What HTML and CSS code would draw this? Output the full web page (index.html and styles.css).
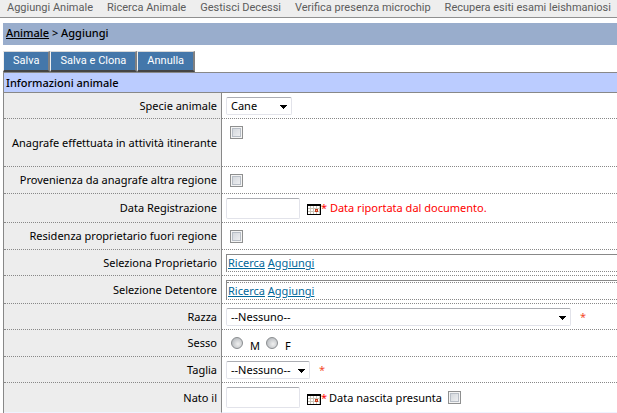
FILE: index.html
```html
<!DOCTYPE html>
<html lang="it">
<head>
<meta charset="utf-8">
<title>Aggiungi Animale</title>
<link rel="stylesheet" href="styles.css">
</head>
<body>
<nav class="menu">
  <a href="#">Aggiungi Animale</a>
  <a href="#">Ricerca Animale</a>
  <a href="#">Gestisci Decessi</a>
  <a href="#">Verifica presenza microchip</a>
  <a href="#">Recupera esiti esami leishmaniosi</a>
</nav>
<main>
  <div class="trail"><a href="#">Animale</a> &gt; Aggiungi</div>
  <form>
    <div class="actions">
      <button type="button">Salva</button>
      <button type="button">Salva e Clona</button>
      <button type="button">Annulla</button>
    </div>
    <table class="details">
      <thead>
        <tr><th colspan="2">Informazioni animale</th></tr>
      </thead>
      <tbody>
        <tr class="short">
          <td class="label"><label for="specie">Specie animale</label></td>
          <td><div class="field"><span class="select"><select id="specie" class="narrow"><option>Cane</option></select><svg class="arrow" viewBox="0 0 7 4"><path d="M0 0h7v1H6v1H5v1H4v1H3V3H2V2H1V1H0z"/></svg></span></div></td>
        </tr>
        <tr class="tall">
          <td class="label"><label for="itinerante">Anagrafe effettuata in attività itinerante</label></td>
          <td><div class="field"><input type="checkbox" id="itinerante"></div></td>
        </tr>
        <tr>
          <td class="label"><label for="altra">Provenienza da anagrafe altra regione</label></td>
          <td><div class="field"><input type="checkbox" id="altra"></div></td>
        </tr>
        <tr class="date">
          <td class="label"><label for="registrazione">Data Registrazione</label></td>
          <td><div class="field"><input type="text" id="registrazione"><svg class="calendar" viewBox="0 0 14 11"><path fill="#000" d="M0 0h14v11H0z"/><path fill="#fff" d="M1 2h12v8H1z"/><path fill="#c9c4b6" d="M3 2h1v8H3zM6 2h1v8H6zM9 2h1v8H9zM12 2h1v8h-1zM1 4h12v1H1zM1 7h12v1H1z"/><path fill="#c33a1e" d="M8 5h3v3H8z"/><path fill="#ffb18c" d="M9 6h1v1H9z"/></svg><span class="warning">* Data riportata dal documento.</span></div></td>
        </tr>
        <tr>
          <td class="label"><label for="fuori">Residenza proprietario fuori regione</label></td>
          <td><div class="field"><input type="checkbox" id="fuori"></div></td>
        </tr>
        <tr class="short">
          <td class="label">Seleziona Proprietario</td>
          <td class="flush"><div class="picker"><div><a href="#">Ricerca</a> <a href="#">Aggiungi</a></div></div></td>
        </tr>
        <tr class="double">
          <td class="label">Selezione Detentore</td>
          <td class="flush"><div class="picker ruled"><div><a href="#">Ricerca</a> <a href="#">Aggiungi</a></div></div></td>
        </tr>
        <tr class="short">
          <td class="label"><label for="razza">Razza</label></td>
          <td><div class="field"><span class="select"><select id="razza" class="wide"><option>--Nessuno--</option></select><svg class="arrow" viewBox="0 0 7 4"><path d="M0 0h7v1H6v1H5v1H4v1H3V3H2V2H1V1H0z"/></svg></span><span class="required">*</span></div></td>
        </tr>
        <tr>
          <td class="label">Sesso</td>
          <td><div class="field"><input type="radio" name="sesso" id="m"><label class="sex" for="m">M</label><input type="radio" name="sesso" id="f"><label class="sex" for="f">F</label></div></td>
        </tr>
        <tr class="short">
          <td class="label"><label for="taglia">Taglia</label></td>
          <td><div class="field"><span class="select"><select id="taglia" class="medium"><option>--Nessuno--</option></select><svg class="arrow" viewBox="0 0 7 4"><path d="M0 0h7v1H6v1H5v1H4v1H3V3H2V2H1V1H0z"/></svg></span><span class="required">*</span></div></td>
        </tr>
        <tr class="birth">
          <td class="label"><label for="nato">Nato il</label></td>
          <td><div class="field"><input type="text" id="nato"><svg class="calendar" viewBox="0 0 14 11"><path fill="#000" d="M0 0h14v11H0z"/><path fill="#fff" d="M1 2h12v8H1z"/><path fill="#c9c4b6" d="M3 2h1v8H3zM6 2h1v8H6zM9 2h1v8H9zM12 2h1v8h-1zM1 4h12v1H1zM1 7h12v1H1z"/><path fill="#c33a1e" d="M8 5h3v3H8z"/><path fill="#ffb18c" d="M9 6h1v1H9z"/></svg><span class="star">*</span><label class="presumed" for="presunta">Data nascita presunta</label><input type="checkbox" id="presunta"></div></td>
        </tr>
      </tbody>
    </table>
  </form>
</main>
</body>
</html>
```
FILE: styles.css
```css
* { box-sizing: border-box; }
body {
  margin: 0;
  background: #fff;
  color: #000;
  font: 11px/14px "Trebuchet MS", "Noto Sans", sans-serif;
  overflow-x: hidden;
}
button, input, select { font: inherit; margin: 0; }

.menu {
  display: flex;
  gap: 14px;
  height: 18px;
  padding: 1px 7px 0;
  background: #eee;
  border-bottom: 1px solid #909090;
  font-family: "Trebuchet MS", Roboto, sans-serif;
  white-space: nowrap;
}
.menu a { color: #5c5c5c; text-decoration: none; }

main { padding: 5px 0 0 3px; }
.trail {
  height: 22px;
  padding: 3px;
  background: #99adcc;
  font-weight: 500;
}
.trail a { color: #000; }

.actions { display: flex; padding-top: 6px; }
.actions button {
  height: 21px;
  padding: 0 9px;
  border: solid;
  border-width: 1px 2px 2px 1px;
  border-color: #d8d8d8 #808080 #444 #f0f0f0;
  background: #47a;
  color: #fff;
  font-family: "Trebuchet MS", Roboto, sans-serif;
  white-space: nowrap;
}

.details {
  width: 100%;
  border-collapse: separate;
  border-spacing: 0;
  border-top: 1px solid #888;
  border-left: 1px solid #888;
}
.details th {
  height: 20px;
  padding: 0 2px;
  border-bottom: 1px solid #888;
  background: #bcf;
  font-weight: 500;
  text-align: left;
}
.details td {
  height: 27px;
  padding: 0 0 0 4px;
  border-bottom: 1px dotted #888;
}
.details .label {
  width: 218px;
  padding: 0 4px;
  border-right: 1px solid #888;
  background: #ededed;
  text-align: right;
  white-space: nowrap;
}
.details .short td { height: 26px; }
.details .tall td { height: 48px; }
.details .tall td + td { padding-top: 7px; vertical-align: top; }
.details .date td { height: 29px; }
.details .double td { height: 28px; }
.details .birth td { height: 30px; border-bottom: 1px solid #eef3ff; }
.details .flush { vertical-align: bottom; padding-bottom: 3px; }

.field { display: flex; align-items: center; }

select, input[type="text"] {
  appearance: none;
  border: 1px solid #e2e3ea;
  border-top-color: #abadb3;
  border-radius: 2px;
  background: #fff;
  color: #000;
}
select { height: 18px; padding: 0 4px; width: 100%; }
.select { display: grid; align-items: center; }
.select select, .select .arrow { grid-area: 1 / 1; }
.arrow {
  width: 7px;
  height: 4px;
  margin: 3px 5px 0 0;
  justify-self: end;
  pointer-events: none;
}
select.narrow { width: 66px; }
select.medium { width: 84px; }
select.wide { width: 345px; }
input[type="text"] { width: 74px; height: 21px; padding: 0 3px; }

input[type="checkbox"] {
  appearance: none;
  width: 13px;
  height: 13px;
  margin-left: 4px;
  border: 1px solid #8e8f8f;
  background: linear-gradient(135deg, #cdd2d8, #f5f5f6);
  box-shadow: inset 0 0 0 1px #f4f4f4, inset 0 0 0 2px #b8bec6;
}
input[type="radio"] {
  appearance: none;
  width: 12px;
  height: 12px;
  margin-left: 5px;
  border: 1px solid #8a8d90;
  border-radius: 50%;
  background: radial-gradient(circle at 60% 60%, #f0f0f0, #a8adb2);
}
.sex { padding: 5px 0 0 7px; }
.sex + input { margin-left: 6px; }

.calendar { width: 14px; height: 11px; margin: 3px 0 0 7px; }
.warning, .star, .required { color: #f00; }
.required { margin-left: 9px; color: #f54b2a; }
.presumed { margin: 0 2px; }

.picker {
  height: 18px;
  border: 1px solid #888;
  border-right: 0;
  border-bottom-style: dotted;
}
.picker a { color: #069; }
.picker div { padding: 1px 0 0 1px; }
.ruled { height: 20px; padding-top: 1px; }
.ruled div { border-top: 1px dotted #888; }
```
